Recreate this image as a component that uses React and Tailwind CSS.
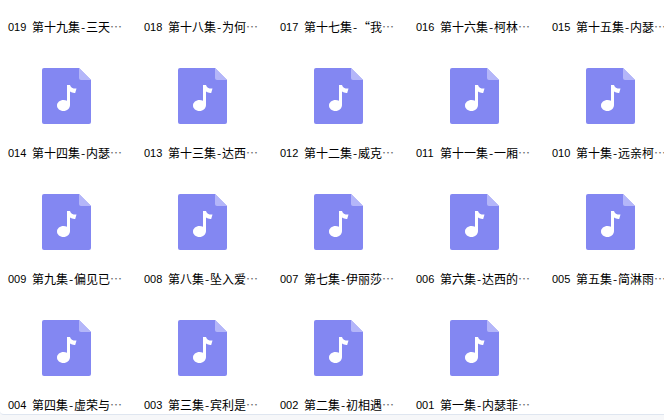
const rows = [
  [["019", "第十九集", "三天"], ["018", "第十八集", "为何"], ["017", "第十七集", "“我"], ["016", "第十六集", "柯林"], ["015", "第十五集", "内瑟"]],
  [["014", "第十四集", "内瑟"], ["013", "第十三集", "达西"], ["012", "第十二集", "威克"], ["011", "第十一集", "一厢"], ["010", "第十集", "远亲柯"]],
  [["009", "第九集", "偏见已"], ["008", "第八集", "坠入爱"], ["007", "第七集", "伊丽莎"], ["006", "第六集", "达西的"], ["005", "第五集", "简淋雨"]],
  [["004", "第四集", "虚荣与"], ["003", "第三集", "宾利是"], ["002", "第二集", "初相遇"], ["001", "第一集", "内瑟菲"]],
];

const AudioFile = () => (
  <svg width="50" height="56" viewBox="0 0 50 56" className="block">
    <path d="M2 0H37L49 12V54a2 2 0 0 1-2 2H2a2 2 0 0 1-2-2V2a2 2 0 0 1 2-2Z" fill="#8387f2" />
    <path d="M37 0L49 12H39a2 2 0 0 1-2-2Z" fill="#b4b6f9" />
    <path d="M25 17h3c.6 2.6 2.600 3.700 6.500 3.600l-1.300 4.400c-2 .2-3.800-.4-5.200-1.400V37c0 3.400-3 6-6.500 6s-6.500-2.400-6.500-5.500 3-5.500 6.500-5.500c1.200 0 2.500.3 3.500.8Z" fill="#fff" />
  </svg>
);

const Label = ({ no, ep, title }) => (
  <div className="flex h-[14px] w-[136px] shrink-0 items-center whitespace-nowrap text-[12px] leading-[14px] text-black">
    <span className="w-[24px] shrink-0 font-['Liberation_Sans',sans-serif] text-[11px]">{no}</span>
    <span className="flex font-['Noto_Sans_CJK_SC',sans-serif]">
      {ep}
      <span className="w-[6px] text-center">-</span>
      {title}
      <span className="text-[#666]">…</span>
    </span>
  </div>
);

export default function App() {
  return (
    <div className="flex h-[420px] w-[664px] flex-col overflow-hidden bg-[#f6f7f9]">
      <div className="flex h-[415px] shrink-0 flex-col rounded-bl-[4px] border-b border-[#dfe6f0] bg-white pl-[8px] pt-[20px]">
        {rows.map((row, i) => (
          <div key={i}>
            {i > 0 && (
              <div className="flex pb-[22px] pt-[34px]">
                {row.map(([no]) => (
                  <div key={no} className="w-[136px] shrink-0 pl-[34px]">
                    <AudioFile />
                  </div>
                ))}
              </div>
            )}
            <div className="flex">
              {row.map(([no, ep, title]) => (
                <Label key={no} no={no} ep={ep} title={title} />
              ))}
            </div>
          </div>
        ))}
      </div>
    </div>
  );
}
